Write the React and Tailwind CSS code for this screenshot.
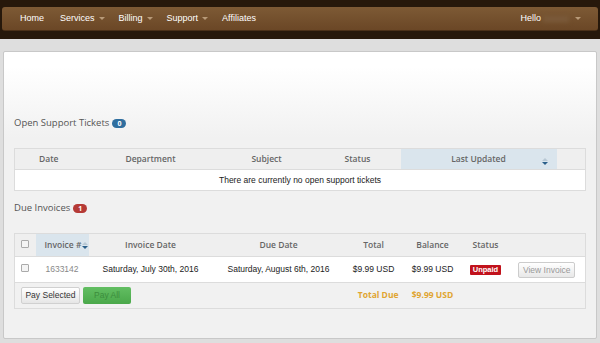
const NAV = [
  { label: 'Home' },
  { label: 'Services', caret: true },
  { label: 'Billing', caret: true },
  { label: 'Support', caret: true },
  { label: 'Affiliates' },
]

function Caret() {
  return <span className="ml-[4px] inline-block align-middle w-0 h-0 border-l-[3px] border-r-[3px] border-t-[3px] border-l-transparent border-r-transparent border-t-[#b89a78]" />
}

function SortIcon() {
  return (
    <span className="inline-flex flex-col items-center gap-[1px] align-middle">
      <span className="w-0 h-0 border-l-[3px] border-r-[3px] border-b-[3px] border-l-transparent border-r-transparent border-b-[#b8c8d4]" />
      <span className="w-0 h-0 border-l-[3px] border-r-[3px] border-t-[3px] border-l-transparent border-r-transparent border-t-[#2a5f8a]" />
    </span>
  )
}

function Check() {
  return <span className="inline-block w-[8px] h-[8px] border border-[#aaa] bg-[#f4f4f4] rounded-[1px]" />
}

export default function App() {
  return (
    <div className="w-[600px] h-[343px] overflow-hidden bg-[#dedede] text-[#333]" style={{ fontFamily: 'Arial, "Liberation Sans", sans-serif' }}>
      {/* NAVBAR */}
      <div className="h-[39px] bg-[#26180b] pt-[7px] px-[2px]">
        <div className="h-[24px] rounded-[3px] bg-gradient-to-b from-[#7d5a35] to-[#6b4726] flex items-center pl-[18px] pr-[17px] text-white text-[9px] border-b border-[#4a3018]">
          {NAV.map(n => (
            <span key={n.label} className={`flex items-center ${n.caret ? 'mr-[14px]' : 'mr-[16px]'}`}>
              {n.label}
              {n.caret && <Caret />}
            </span>
          ))}
          <span className="ml-auto flex items-center">
            Hello<span className="inline-block w-[26px] h-[6px] ml-[2px] bg-[#7a5a3a] blur-[2px]" />
            <span className="ml-[2px]"><Caret /></span>
          </span>
        </div>
      </div>

      {/* PANEL */}
      <div className="mt-[12px] mx-[3px] h-[288px] border border-[#c8c8c8] rounded-[2px] bg-gradient-to-b from-white from-[5%] to-[#f1f1f1] to-[30%] px-[10px] pt-[63px]">
        <div className="flex items-center text-[9.5px] text-[#555] h-[16px]" style={{ fontFamily: '"Open Sans", sans-serif' }}>
          Open Support Tickets
          <span className="ml-[3px] px-[5px] h-[9px] leading-[9px] rounded-full bg-[#2f6e9f] text-white text-[7px] font-bold">0</span>
        </div>

        <table className="mt-[17px] w-[571px] border border-[#dcdcdc] border-collapse table-fixed text-[8.5px]">
          <colgroup>
            <col className="w-[68px]" /><col className="w-[136px]" /><col className="w-[96px]" /><col className="w-[86px]" /><col className="w-[156px]" /><col className="w-[29px]" />
          </colgroup>
          <thead>
            <tr className="h-[21px] bg-[#efefef] text-[8.5px] text-[#666] font-semibold border-b border-[#dcdcdc]" style={{ fontFamily: '"Open Sans", sans-serif' }}>
              <th className="font-semibold">Date</th>
              <th className="font-semibold">Department</th>
              <th className="font-semibold">Subject</th>
              <th className="font-semibold">Status</th>
              <th className="font-semibold bg-[#dae5ed] relative">Last Updated<span className="absolute right-[9px] top-[6px]"><SortIcon /></span></th>
              <th />
            </tr>
          </thead>
          <tbody>
            <tr className="h-[21px] bg-white">
              <td colSpan={6} className="text-center text-[8.5px] text-[#222]">There are currently no open support tickets</td>
            </tr>
          </tbody>
        </table>

        <div className="mt-[9px] flex items-center text-[9.5px] text-[#555] h-[16px]" style={{ fontFamily: '"Open Sans", sans-serif' }}>
          Due Invoices
          <span className="ml-[3px] px-[5px] h-[9px] leading-[9px] rounded-full bg-[#b53a36] text-white text-[7px] font-bold">1</span>
        </div>

        <table className="mt-[17px] w-[571px] border border-[#dcdcdc] border-collapse table-fixed text-[8.5px]">
          <colgroup>
            <col className="w-[21px]" /><col className="w-[53px]" /><col className="w-[124px]" /><col className="w-[132px]" /><col className="w-[58px]" /><col className="w-[60px]" /><col className="w-[46px]" /><col className="w-[77px]" />
          </colgroup>
          <thead>
            <tr className="h-[23px] bg-[#efefef] text-[8.5px] text-[#666] border-b border-[#dcdcdc]" style={{ fontFamily: '"Open Sans", sans-serif' }}>
              <th className="text-center"><Check /></th>
              <th className="font-semibold bg-[#dae5ed] text-left pl-[9px] whitespace-nowrap">Invoice #<span className="ml-[1px]"><SortIcon /></span></th>
              <th className="font-semibold">Invoice Date</th>
              <th className="font-semibold">Due Date</th>
              <th className="font-semibold">Total</th>
              <th className="font-semibold">Balance</th>
              <th className="font-semibold">Status</th>
              <th />
            </tr>
          </thead>
          <tbody>
            <tr className="h-[26px] bg-white text-center border-b border-[#dcdcdc] text-[#222]">
              <td><Check /></td>
              <td className="text-[#888]">1633142</td>
              <td>Saturday, July 30th, 2016</td>
              <td>Saturday, August 6th, 2016</td>
              <td>$9.99 USD</td>
              <td>$9.99 USD</td>
              <td>
                <span className="inline-block px-[3px] h-[10px] leading-[10px] bg-[#c1121c] text-white text-[7.5px] font-bold rounded-[1px]">Unpaid</span>
              </td>
              <td>
                <span className="inline-block w-[57px] h-[16px] leading-[14px] border border-[#ccc] rounded-[2px] bg-gradient-to-b from-white to-[#e8e8e8] text-[#999] text-[8.5px]">View Invoice</span>
              </td>
            </tr>
            <tr className="h-[26px]">
              <td colSpan={4} className="pl-[6px]">
                <div className="flex gap-[3px]">
                  <span className="w-[59px] h-[17px] leading-[15px] text-center border border-[#d0d0d0] rounded-[2px] bg-gradient-to-b from-white to-[#e6e6e6] text-[#333] text-[8.5px]">Pay Selected</span>
                  <span className="w-[48px] h-[17px] leading-[17px] text-center rounded-[2px] bg-gradient-to-b from-[#62be62] to-[#4aa84a] text-[#3c8d3c] text-[8.5px]">Pay All</span>
                </div>
              </td>
              <td className="text-right pr-[4px] text-[#e0a531] font-bold text-[8.5px]" style={{ fontFamily: '"Open Sans", sans-serif' }}>Total Due</td>
              <td className="text-center text-[#e0a531] font-bold text-[8.5px]" style={{ fontFamily: '"Open Sans", sans-serif' }}>$9.99 USD</td>
              <td colSpan={2} />
            </tr>
          </tbody>
        </table>
      </div>
    </div>
  )
}
